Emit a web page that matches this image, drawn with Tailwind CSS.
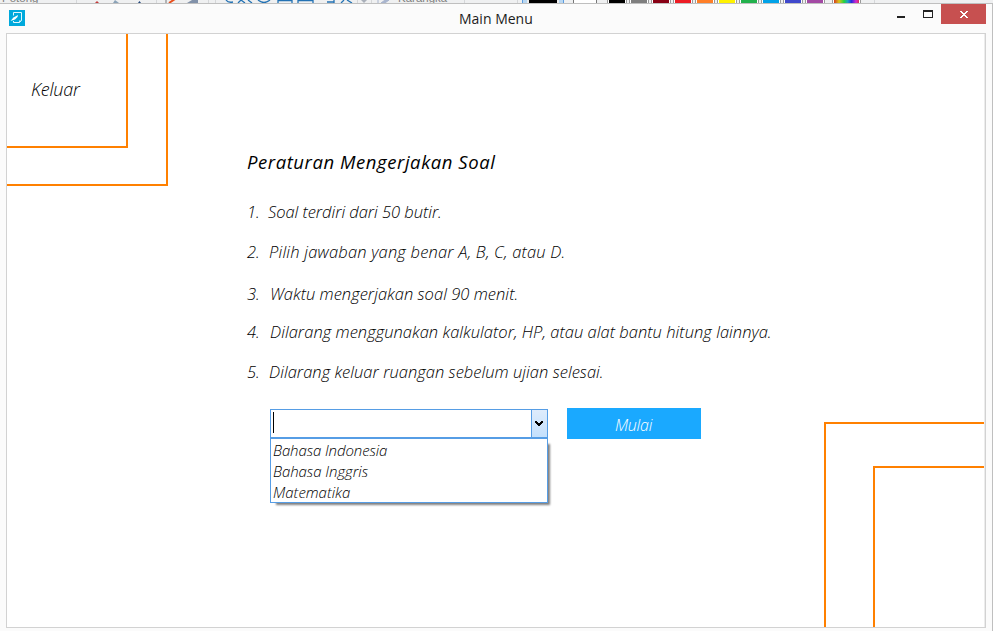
<!DOCTYPE html>
<html lang="id">
<head>
<meta charset="utf-8">
<title>Main Menu</title>
<script src="https://cdn.jsdelivr.net/npm/@tailwindcss/browser@4"></script>
</head>
<body class="w-[993px] h-[631px] overflow-hidden bg-[#fbfbfb] flex flex-col font-['Open_Sans','Noto_Sans',sans-serif] text-black">
  <!-- toolbar of the window behind -->
  <svg class="block shrink-0" width="993" height="3" viewBox="0 0 993 3" shape-rendering="crispEdges">
    <rect width="993" height="3" fill="#eff0f1"/>
    <g font-family="Liberation Sans, sans-serif" font-size="11.500" fill="#808080">
      <text x="2" y="2">Potong</text><text x="398" y="2">Karangka</text>
    </g>
    <g fill="#d5d7d9"><rect x="76" width="1" height="3"/><rect x="156" width="1" height="3"/><rect x="208" width="1" height="3"/><rect x="215" width="1" height="3"/><rect x="357" width="1" height="3"/><rect x="371" width="1" height="3"/><rect x="464" width="1" height="3"/><rect x="517" width="1" height="3"/><rect x="874" width="1" height="3"/></g>
    <g shape-rendering="auto">
      <path d="M95 3l2-2 2 2z" fill="#c43b3b"/><path d="M113 3l2-3 4 3z" fill="#8ba3b8"/><path d="M138 3l1.500-2 1.500 2z" fill="#24477c"/>
      <path d="M166 0v3" stroke="#777"/><path d="M169 3l6-4" stroke="#e8501e" stroke-width="2"/><path d="M187 3l5-3h6v3z" fill="#8292aa"/>
      <g fill="none" stroke="#2372b4" stroke-width="1.300"><path d="M226 0q2 3 7 2M238 3l3-3 4 3M248 0l4 3M258 0q6 5 12 0M278 0v3M292 0v3M278 .5h14M298 0v3M313 0v3M298 .5h15M327 2h7M334 0v3M341 3l3-3M347 0l5 3"/></g>
      <path d="M361 0h6l-3 3z" fill="#aab0ba"/><path d="M378 0v3M381 3l4-3h4l-4 3z" stroke="#a9b5ce" fill="#a9b5ce"/>
    </g>
    <rect x="522" width="42" height="3" fill="#b9d7f1"/><rect x="522" width="1" height="3" fill="#5b9ce0"/><rect x="527" width="32" height="3" fill="#eee"/><rect x="529" width="28" height="3" fill="#000"/><rect x="563" width="1" height="3" fill="#5b9ce0"/>
    <rect x="573" width="24" height="3" fill="#777"/><rect x="574" width="22" height="3" fill="#fff"/>
    <g fill="#fff" stroke="#999"><rect x="607.500" y="-2" width="19" height="8"/><rect x="629.500" y="-2" width="19" height="8"/><rect x="651.500" y="-2" width="19" height="8"/><rect x="673.500" y="-2" width="19" height="8"/><rect x="695.500" y="-2" width="19" height="8"/><rect x="717.500" y="-2" width="19" height="8"/><rect x="739.500" y="-2" width="19" height="8"/><rect x="761.500" y="-2" width="19" height="8"/><rect x="783.500" y="-2" width="19" height="8"/><rect x="805.500" y="-2" width="19" height="8"/><rect x="832.500" y="-2" width="28" height="8"/></g>
    <rect x="609" width="16" height="3" fill="#000"/><rect x="631" width="16" height="3" fill="#7f7f7f"/><rect x="653" width="16" height="3" fill="#880015"/><rect x="675" width="16" height="3" fill="#ed1c24"/><rect x="697" width="16" height="3" fill="#ff7f27"/><rect x="719" width="16" height="3" fill="#fff200"/><rect x="741" width="16" height="3" fill="#22b14c"/><rect x="763" width="16" height="3" fill="#00a2e8"/><rect x="785" width="16" height="3" fill="#3f48cc"/><rect x="807" width="16" height="3" fill="#a349a4"/>
    <defs><linearGradient id="spectrum"><stop offset="0" stop-color="#d33a20"/><stop offset=".2" stop-color="#d9c21c"/><stop offset=".4" stop-color="#22d43c"/><stop offset=".55" stop-color="#1aa0c8"/><stop offset=".7" stop-color="#2c28e0"/><stop offset=".88" stop-color="#d22ad0"/><stop offset="1" stop-color="#d83050"/></linearGradient></defs>
    <rect x="834" width="25" height="3" fill="url(#spectrum)"/>
  </svg>

  <div class="flex-1 min-h-0 flex flex-col border-t border-r border-t-[#bfbfbf] border-r-[#bfbfbf]">
    <header class="h-[29px] shrink-0 grid grid-cols-[459px_1fr_auto] items-start pr-1.5">
      <svg class="ml-[9px] mt-1.5" width="16" height="16" viewBox="0 0 16 16">
        <rect width="16" height="16" fill="#00a9dc"/>
        <path d="M4.500 5.500v-3h8v8l-2 2h-6v-1.500" fill="none" stroke="#e2f7fc"/>
        <path d="M10 13v-2.500h3z" fill="#c9eff9"/>
        <path d="M1.500 11l3-3.500L9 5l-.5 2L6 9.500z" fill="#fff"/>
      </svg>
      <div class="justify-self-start whitespace-nowrap text-[14px] leading-[20px] mt-[5px] font-medium text-[#1c1c1c]">Main Menu</div>
      <svg width="103" height="20" viewBox="0 0 103 20" shape-rendering="crispEdges">
        <rect x="14" y="12" width="8" height="2" fill="#222"/>
        <path d="M40 6h10v8h-10zM41 8v5h8V8z" fill="#222" fill-rule="evenodd"/>
        <rect x="58" width="45" height="20" fill="#c75050"/>
        <path d="M77 7h2v1h1v1h2V8h1V7h2v1h-1v1h-1v1h-1v1h1v1h1v1h1v1h-2v-1h-1v-1h-2v1h-1v1h-2v-1h1v-1h1v-1h1v-1h-1v-1h-1v-1h-1z" fill="#fff"/>
      </svg>
    </header>

    <main class="relative ml-1.5 w-[980px] h-[595px] bg-white border border-[#d2d2d2] overflow-hidden">
      <div class="absolute inset-y-0 right-0 w-px bg-[#ececec]"></div>
      <div class="absolute left-0 top-0 w-[161px] h-[152px] border-r-2 border-b-2 border-[#ff8000]"></div>
      <div class="absolute right-px bottom-0 w-[160px] h-[205px] border-l-2 border-t-2 border-[#ff8000]"></div>
      <div class="absolute right-px bottom-0 w-[111px] h-[161px] border-l-2 border-t-2 border-[#ff8000]"></div>

      <div class="flex">
        <button class="w-[121px] h-[114px] shrink-0 border-r-2 border-b-2 border-[#ff8000] flex items-start pl-6 pt-[43px] italic font-light text-[18px] leading-[24px] tracking-[-0.2px]">Keluar</button>
        <section class="ml-[119px] pt-[116px] italic whitespace-nowrap">
          <h1 class="text-[18.500px] leading-[24px] font-medium tracking-[0.56px]">Peraturan Mengerjakan Soal</h1>
          <ol class="mt-[26px] font-light text-[16.500px] leading-[24px] flex flex-col">
            <li class="flex h-10"><span class="w-[21px]">1.</span><span class="tracking-[-0.04px]">Soal terdiri dari 50 butir.</span></li>
            <li class="flex h-[42px]"><span class="w-[22px]">2.</span><span class="tracking-[0.2px]">Pilih jawaban yang benar A, B, C, atau D.</span></li>
            <li class="flex h-[38px]"><span class="w-[23px]">3.</span><span class="tracking-[0.03px]">Waktu mengerjakan soal 90 menit.</span></li>
            <li class="flex h-10"><span class="w-[23px]">4.</span><span class="tracking-[0.04px]">Dilarang menggunakan kalkulator, HP, atau alat bantu hitung lainnya.</span></li>
            <li class="flex h-6"><span class="w-[22px]">5.</span><span class="tracking-[0.03px]">Dilarang keluar ruangan sebelum ujian selesai.</span></li>
          </ol>
          <div class="mt-6 ml-[23px] flex items-start">
            <div class="relative mt-px w-[278px] h-[29px] border border-[#569de5] bg-white flex">
              <div class="flex-1 pl-[2px] pt-[2px]"><div class="w-px h-[21px] bg-black"></div></div>
              <div class="w-[17px] -mr-px border-x border-[#569de5] bg-linear-to-b from-[#deecfc] to-[#c4e0fc] flex items-center justify-center">
                <svg class="-ml-px" width="8" height="6" viewBox="0 0 8 6" shape-rendering="crispEdges"><path d="M0 0h2v1h1v1h2V1h1V0h2v2H7v1H6v1H5v1H3V4H2V3H1V2H0z"/></svg>
              </div>
              <ul class="absolute -left-px top-[28px] w-[278px] h-[65px] border border-[#569de5] bg-white pl-[2px] pt-px text-[15px] leading-[21px] font-light shadow-[4px_4px_2px_-2px_#808080]">
                <li class="tracking-[-0.1px]">Bahasa Indonesia</li>
                <li class="tracking-[-0.05px]">Bahasa Inggris</li>
                <li>Matematika</li>
              </ul>
            </div>
            <button class="ml-[19px] w-[134px] h-[31px] pt-px pr-px bg-[#1aa9ff] text-white font-light italic text-[16px] leading-[30px] tracking-[-0.2px] text-center"><span class="relative top-px">Mulai</span></button>
          </div>
        </section>
      </div>
    </main>
  </div>
</body>
</html>
